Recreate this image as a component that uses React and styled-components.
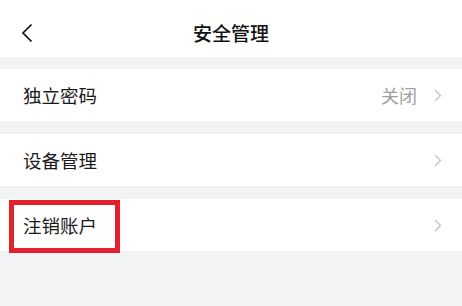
import styled, { createGlobalStyle } from "styled-components";

const GlobalStyle = createGlobalStyle`
  html, body {
    margin: 0;
    padding: 0;
    background: #f2f3f5;
  }
  body {
    font-family: "Noto Sans CJK SC", "Noto Sans", sans-serif;
  }
`;

const rows = [
  { label: "独立密码", value: "关闭" },
  { label: "设备管理" },
  { label: "注销账户", marked: true },
];

export default function App() {
  return (
    <>
      <GlobalStyle />
      <Page>
        <Header>
          <BackButton aria-label="返回">
            <svg width="12" height="20" viewBox="0 0 12 20" fill="none">
              <path d="M10.5 1.5 L2 10 L10.5 18.5" stroke="#111" strokeWidth="1.7" />
            </svg>
          </BackButton>
          <Title>安全管理</Title>
        </Header>

        <List>
          {rows.map((row) => (
            <Row key={row.label}>
              <Label>{row.label}</Label>
              <Right>
                {row.value && <Value>{row.value}</Value>}
                <svg width="8" height="13" viewBox="0 0 8 13" fill="none">
                  <path d="M1 1 L6.5 6.5 L1 12" stroke="#c2c2c2" strokeWidth="1.3" />
                </svg>
              </Right>
              {row.marked && <Highlight />}
            </Row>
          ))}
        </List>
      </Page>
    </>
  );
}

const Page = styled.div`
  width: 462px;
  height: 306px;
  background: #f2f3f5;
  overflow: hidden;
`;

const Header = styled.div`
  position: relative;
  height: 57px;
  background: #fff;
  display: flex;
  align-items: center;
  justify-content: center;
`;

const BackButton = styled.div`
  position: absolute;
  left: 21px;
  top: 23px;
  display: flex;
`;

const Title = styled.div`
  font-size: 19px;
  font-weight: 500;
  color: #111;
  margin-top: 8px;
`;

const List = styled.div`
  display: flex;
  flex-direction: column;
  gap: 13px;
  padding-top: 12px;
`;

const Row = styled.div`
  position: relative;
  height: 52px;
  background: #fff;
  display: flex;
  align-items: center;
  justify-content: space-between;
  padding: 0 20px 0 23px;
`;

const Label = styled.div`
  font-size: 18.5px;
  color: #1a1a1a;
`;

const Right = styled.div`
  display: flex;
  align-items: center;
  gap: 17px;
`;

const Value = styled.div`
  font-size: 18px;
  color: #a0a0a0;
`;

const Highlight = styled.div`
  position: absolute;
  left: 9px;
  top: 1px;
  width: 111px;
  height: 53px;
  box-sizing: border-box;
  border: 5px solid #e3202b;
`;
